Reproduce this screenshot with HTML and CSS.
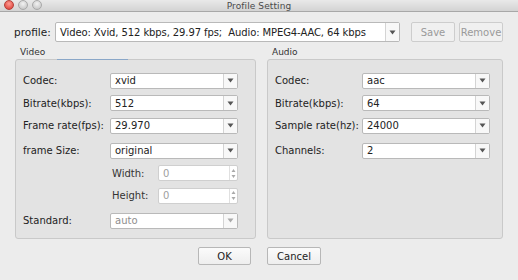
FILE: index.html
```html
<!DOCTYPE html>
<html>
<head>
<meta charset="utf-8">
<link rel="stylesheet" href="styles.css">
</head>
<body>
<div class="window">
  <div class="titlebar">
    <div class="lights">
      <span class="light red"></span>
      <span class="light"></span>
      <span class="light"></span>
    </div>
    <div class="title">Profile Setting</div>
  </div>
  <div class="profile-row">
    <span class="profile-label">profile:</span>
    <div class="combo profile-combo">
      <span class="combo-text">Video: Xvid, 512 kbps, 29.97 fps;&nbsp; Audio: MPEG4-AAC, 64 kbps</span>
      <span class="combo-arrow"><svg width="7" height="5" viewBox="0 0 7 5"><path d="M0.5 0.5 H6.5 L3.5 4.5 Z" fill="#555"/></svg></span>
    </div>
    <button class="btn small disabled">Save</button>
    <button class="btn small disabled">Remove</button>
  </div>
  <div class="groups">
    <div class="group">
      <div class="group-title">Video<span class="focus-line"></span></div>
      <div class="group-box video-box">
        <div class="row">
          <span class="lbl">Codec:</span>
          <div class="combo"><span class="combo-text">xvid</span><span class="combo-arrow"><svg width="7" height="5" viewBox="0 0 7 5"><path d="M0.5 0.5 H6.5 L3.5 4.5 Z" fill="#555"/></svg></span></div>
        </div>
        <div class="row">
          <span class="lbl">Bitrate(kbps):</span>
          <div class="combo"><span class="combo-text">512</span><span class="combo-arrow"><svg width="7" height="5" viewBox="0 0 7 5"><path d="M0.5 0.5 H6.5 L3.5 4.5 Z" fill="#555"/></svg></span></div>
        </div>
        <div class="row">
          <span class="lbl">Frame rate(fps):</span>
          <div class="combo"><span class="combo-text">29.970</span><span class="combo-arrow"><svg width="7" height="5" viewBox="0 0 7 5"><path d="M0.5 0.5 H6.5 L3.5 4.5 Z" fill="#555"/></svg></span></div>
        </div>
        <div class="row r-size">
          <span class="lbl">frame Size:</span>
          <div class="combo"><span class="combo-text">original</span><span class="combo-arrow"><svg width="7" height="5" viewBox="0 0 7 5"><path d="M0.5 0.5 H6.5 L3.5 4.5 Z" fill="#555"/></svg></span></div>
        </div>
        <div class="row sub">
          <span class="lbl"></span>
          <div class="subrow">
            <span class="sublbl">Width:</span>
            <div class="spin"><span class="spin-text">0</span><span class="stepper"><svg width="5" height="11" viewBox="0 0 5 11"><path d="M2.5 1 L4.5 4 H0.5 Z M2.5 10 L4.5 7 H0.5 Z" fill="#aaa"/></svg></span></div>
          </div>
        </div>
        <div class="row sub">
          <span class="lbl"></span>
          <div class="subrow">
            <span class="sublbl">Height:</span>
            <div class="spin"><span class="spin-text">0</span><span class="stepper"><svg width="5" height="11" viewBox="0 0 5 11"><path d="M2.5 1 L4.5 4 H0.5 Z M2.5 10 L4.5 7 H0.5 Z" fill="#aaa"/></svg></span></div>
          </div>
        </div>
        <div class="row r-std">
          <span class="lbl">Standard:</span>
          <div class="combo dis"><span class="combo-text">auto</span><span class="combo-arrow"><svg width="7" height="5" viewBox="0 0 7 5"><path d="M0.5 0.5 H6.5 L3.5 4.5 Z" fill="#aaa"/></svg></span></div>
        </div>
      </div>
    </div>
    <div class="group">
      <div class="group-title">Audio</div>
      <div class="group-box audio-box">
        <div class="row">
          <span class="lbl">Codec:</span>
          <div class="combo"><span class="combo-text">aac</span><span class="combo-arrow"><svg width="7" height="5" viewBox="0 0 7 5"><path d="M0.5 0.5 H6.5 L3.5 4.5 Z" fill="#555"/></svg></span></div>
        </div>
        <div class="row">
          <span class="lbl">Bitrate(kbps):</span>
          <div class="combo"><span class="combo-text">64</span><span class="combo-arrow"><svg width="7" height="5" viewBox="0 0 7 5"><path d="M0.5 0.5 H6.5 L3.5 4.5 Z" fill="#555"/></svg></span></div>
        </div>
        <div class="row">
          <span class="lbl">Sample rate(hz):</span>
          <div class="combo"><span class="combo-text">24000</span><span class="combo-arrow"><svg width="7" height="5" viewBox="0 0 7 5"><path d="M0.5 0.5 H6.5 L3.5 4.5 Z" fill="#555"/></svg></span></div>
        </div>
        <div class="row r-size">
          <span class="lbl">Channels:</span>
          <div class="combo"><span class="combo-text">2</span><span class="combo-arrow"><svg width="7" height="5" viewBox="0 0 7 5"><path d="M0.5 0.5 H6.5 L3.5 4.5 Z" fill="#555"/></svg></span></div>
        </div>
      </div>
    </div>
  </div>
  <div class="footer">
    <button class="btn big">OK</button>
    <button class="btn big">Cancel</button>
  </div>
</div>
</body>
</html>
```
FILE: styles.css
```css
* { box-sizing: border-box; }
html, body { margin: 0; padding: 0; }
body {
  width: 518px;
  height: 280px;
  overflow: hidden;
  background: #ececec;
  font-family: "DejaVu Sans", "Liberation Sans", sans-serif;
  font-size: 10px;
  color: #222;
}
.window {
  width: 518px;
  height: 280px;
  display: flex;
  flex-direction: column;
  background: #ececec;
}
.titlebar {
  height: 12px;
  background: linear-gradient(#e9e9e9, #d3d3d3);
  border-bottom: 1px solid #a8a8a8;
  position: relative;
  display: flex;
  align-items: center;
  justify-content: center;
}
.lights {
  position: absolute;
  left: 4px;
  top: 0px;
  display: flex;
  gap: 4px;
}
.light {
  width: 10px;
  height: 10px;
  border-radius: 50%;
  background: radial-gradient(circle at 50% 35%, #f2f2f2, #bdbdbd);
  border: 1px solid #a9a9a9;
}
.light.red {
  background: radial-gradient(circle at 50% 35%, #ff9c94, #d8352c);
  border-color: #b4403a;
}
.title {
  font-size: 9px;
  color: #4a4a4a;
  letter-spacing: 0.1px;
}
.profile-row {
  display: flex;
  align-items: center;
  margin-top: 10px;
  height: 20px;
  padding-left: 14px;
}
.profile-label {
  font-size: 10.5px;
  width: 41px;
  color: #222;
}
.combo {
  display: flex;
  align-items: stretch;
  background: #fff;
  border: 1px solid #b9b9b9;
  border-radius: 2px;
  height: 16px;
  width: 128px;
}
.combo-text {
  flex: 1;
  padding-left: 4px;
  display: flex;
  align-items: center;
  white-space: nowrap;
  overflow: hidden;
  font-size: 10px;
}
.combo-arrow {
  width: 14px;
  border-left: 1px solid #d4d4d4;
  display: flex;
  align-items: center;
  justify-content: center;
  background: #f8f8f8;
}
.profile-combo {
  width: 345px;
  height: 20px;
}
.profile-combo .combo-text {
  font-size: 10px;
  letter-spacing: -0.1px;
  padding-left: 4px;
}
.btn {
  font-family: inherit;
  background: linear-gradient(#fbfbfb, #eeeeee);
  border: 1px solid #b7b7b7;
  border-radius: 2px;
  padding: 0;
  color: #222;
}
.btn.small {
  height: 20px;
  font-size: 10px;
}
.btn.disabled { color: #9a9a9a; border-color: #cdcdcd; background: #f0f0f0; }
.profile-row .btn:first-of-type { margin-left: 11px; width: 44px; }
.profile-row .btn:last-of-type { margin-left: 4px; width: 44px; }
.groups {
  display: flex;
  gap: 11px;
  padding: 0 15px;
  margin-top: 4px;
}
.group:first-child { width: 241px; }
.group:last-child { width: 236px; }
.group-title {
  font-size: 9px;
  color: #333;
  padding-left: 5px;
  height: 13px;
  line-height: 13px;
  position: relative;
}
.focus-line {
  position: absolute;
  left: 42px;
  bottom: -1px;
  width: 71px;
  height: 1px;
  background: #8aa7c8;
}
.group-box {
  height: 180px;
  background: #e3e3e3;
  border: 1px solid #c9c9c9;
  border-radius: 3px;
  padding-top: 13px;
  padding-left: 7px;
  display: flex;
  flex-direction: column;
  gap: 7px;
}
.row {
  display: flex;
  align-items: center;
  height: 15.5px;
}
.row.r-size { margin-top: 2.5px; }
.row.r-std { margin-top: 2.5px; }
.video-box .lbl { width: 87px; }
.audio-box .lbl { width: 87px; }
.lbl {
  font-size: 10px;
  color: #222;
  white-space: nowrap;
}
.row .combo { height: 16px; }
.combo.dis .combo-text { color: #8e8e8e; }
.subrow {
  display: flex;
  align-items: center;
  width: 128px;
  padding-left: 2px;
}
.sublbl {
  width: 46px;
  font-size: 10px;
  color: #333;
}
.spin {
  display: flex;
  width: 80px;
  height: 16px;
  background: #fff;
  border: 1px solid #cfcfcf;
  border-radius: 2px;
}
.spin-text {
  flex: 1;
  color: #a0a0a0;
  padding-left: 4px;
  display: flex;
  align-items: center;
  font-size: 10px;
}
.stepper {
  width: 8px;
  display: flex;
  align-items: center;
  justify-content: center;
  border-left: 1px solid #e0e0e0;
}
.footer {
  display: flex;
  justify-content: center;
  gap: 16px;
  margin-top: 8px;
  padding-left: 1px;
}
.btn.big {
  height: 18px;
  width: 53px;
  font-size: 10px;
}
.footer .btn:last-child { width: 54px; }
```
